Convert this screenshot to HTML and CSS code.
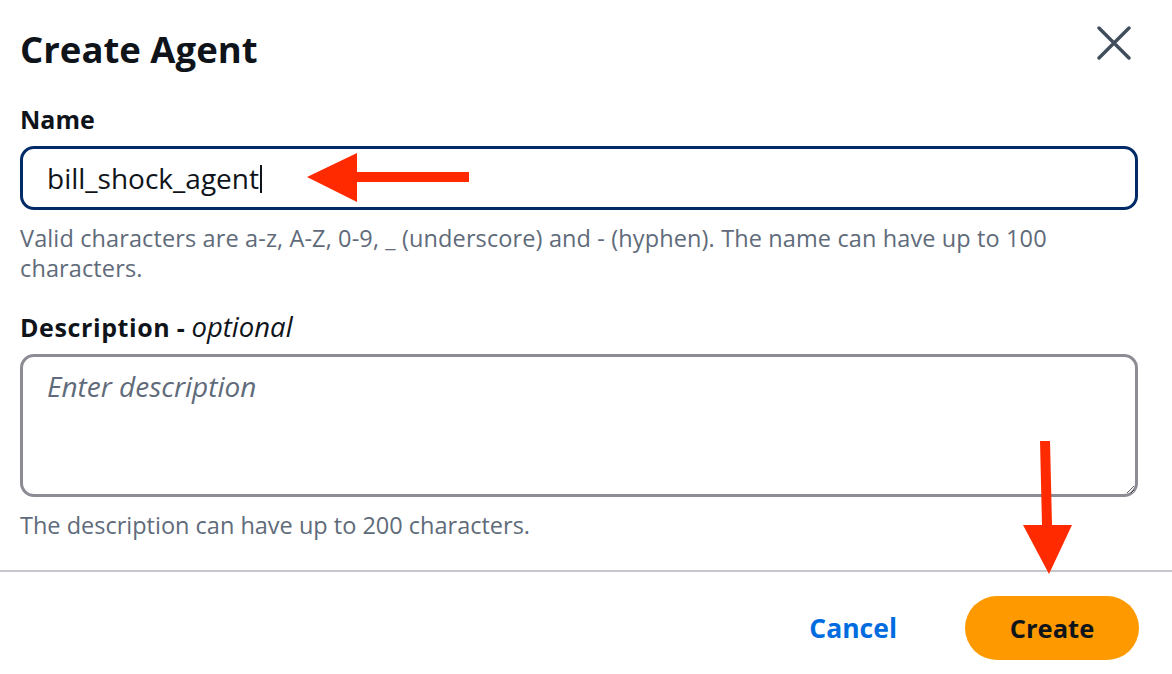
FILE: index.html
```html
<!DOCTYPE html>
<html lang="en">
<head>
<meta charset="utf-8">
<title>Create Agent</title>
<link rel="stylesheet" href="styles.css">
</head>
<body>
<div class="modal">
  <div class="modal-main">
    <div class="header">
      <h1 class="title">Create Agent</h1>
      <button class="close" aria-label="Close">
        <svg width="34" height="34" viewBox="0 0 34 34"><path d="M2 2 L32 32 M32 2 L2 32" stroke="#414d5c" stroke-width="3.4" stroke-linecap="round" fill="none"/></svg>
      </button>
    </div>
    <div class="field">
      <label class="label">Name</label>
      <div class="input focused"><span class="value">bill_shock_agent</span><span class="caret"></span></div>
      <p class="hint hint-long">Valid characters are a-z, A-Z, 0-9, _ (underscore) and - (hyphen). The name can have up to 100 characters.</p>
    </div>
    <div class="field">
      <label class="label"><span class="label-desc">Description</span> - <i class="opt">optional</i></label>
      <textarea class="textarea" placeholder="Enter description"></textarea>
      <p class="hint">The description can have up to 200 characters.</p>
    </div>
  </div>
  <div class="footer">
    <a class="link" href="#">Cancel</a>
    <button class="primary">Create</button>
  </div>
</div>
<svg class="annot" width="1172" height="674" viewBox="0 0 1172 674">
  <polygon fill="#ff2a00" points="307,177 357,153 357,172 469,172 469,182 357,182 357,202"/>
  <polygon fill="#ff2a00" points="1040,441 1050,441 1052,525 1072,525 1049,574 1023,525 1042,525"/>
</svg>
</body>
</html>
```
FILE: styles.css
```css
* { box-sizing: border-box; }
html, body { margin: 0; padding: 0; background: #fff; }
body {
  font-family: "Open Sans", "Noto Sans", sans-serif;
  color: #0f141a;
  width: 1172px;
  height: 674px;
  overflow: hidden;
  position: relative;
}
.modal-main { padding: 0 34px 0 20px; }
.header {
  display: flex;
  justify-content: space-between;
  align-items: flex-start;
  height: 102px;
  padding-top: 26px;
}
.title {
  margin: 0;
  font-size: 36.5px;
  font-weight: 700;
  line-height: 46px;
}
.close {
  border: 0;
  background: none;
  padding: 0;
  margin: 0 7px 0 0;
  width: 34px;
  height: 34px;
  display: block;
}
.close svg { display: block; }
.field { display: flex; flex-direction: column; }
.label {
  font-size: 25px;
  font-weight: 700;
  line-height: 34px;
  height: 34px;
  margin-bottom: 10px;
}
.label-desc { letter-spacing: 0.6px; }
.opt { font-weight: 400; font-size: 27.5px; }
.input {
  height: 64px;
  border: 3.5px solid #002b66;
  border-radius: 14px;
  display: flex;
  align-items: center;
  padding-left: 24px;
  font-size: 28px;
}
.caret {
  display: inline-block;
  width: 2px;
  height: 28px;
  background: #0f141a;
  margin-left: 1px;
  margin-top: 2px;
}
.hint {
  margin: 13px 0 0 0;
  font-size: 23.5px;
  line-height: 30px;
  color: #5f6b7a;
}
.hint-long { letter-spacing: 0.12px; }
.field + .field { margin-top: 27px; }
.textarea {
  height: 143px;
  border: 3.5px solid #8c8c94;
  border-radius: 14px;
  padding: 10px 24px;
  font-family: inherit;
  font-size: 28px;
  resize: vertical;
  outline: none;
}
.textarea::placeholder { color: #5f6b7a; font-style: italic; }
.footer {
  position: absolute;
  left: 0; right: 0; top: 570px;
  border-top: 2px solid #c6c6cd;
  display: flex;
  justify-content: flex-end;
  align-items: center;
  gap: 68px;
  padding: 24px 33px 0 0;
}
.link {
  color: #006ce0;
  font-weight: 700;
  font-size: 26.5px;
  text-decoration: none;
}
.primary {
  width: 174px;
  height: 64px;
  border: 0;
  border-radius: 32px;
  background: #ff9900;
  color: #0f141a;
  font-family: inherit;
  font-weight: 700;
  font-size: 25.5px;
}
.annot { position: absolute; left: 0; top: 0; pointer-events: none; }
```
